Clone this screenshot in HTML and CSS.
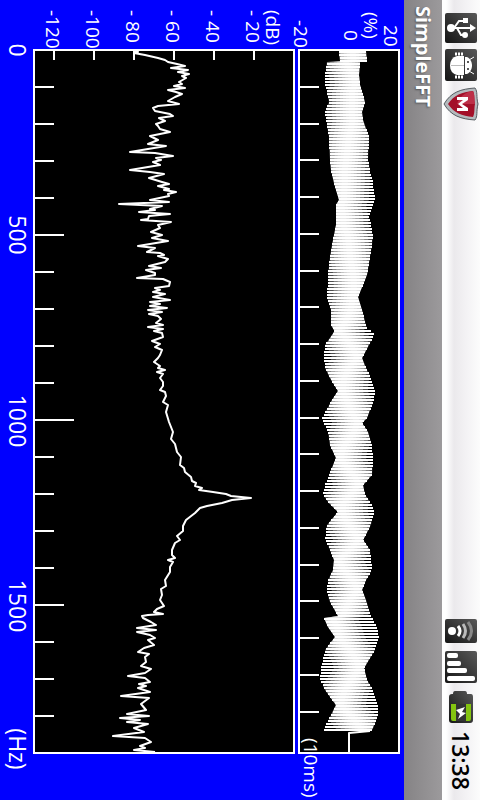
FILE: index.html
```
<!DOCTYPE html>
<html lang="en">
<head>
  <meta charset="UTF-8">
  <meta name="viewport" content="width=device-width, initial-scale=1.0">
  <title>SimpleFFT</title>
  <link rel="stylesheet" href="styles.css">
</head>
<body>

  <header class="status-bar">
    <div class="notifications">
      <svg class="icon" viewBox="0 0 32 30" width="32" height="30" role="img" aria-label="USB connected">
        <rect width="32" height="30" rx="2" fill="url(#tile)"/>
        <g stroke="#fff" stroke-width="2" fill="none">
          <path d="M6 15H26M9 15L14 8H19M12 15L16 22H21"/>
        </g>
        <circle cx="6" cy="15" r="4" fill="#fff"/>
        <path d="M25 11L31 15L25 19Z" fill="#fff"/>
        <circle cx="20" cy="22" r="3" fill="#fff"/>
        <rect x="18" y="5" width="5" height="5" fill="#fff"/>
      </svg>
      <svg class="icon" viewBox="0 0 32 32" width="32" height="32" role="img" aria-label="USB debugging">
        <rect width="32" height="32" rx="2" fill="url(#tile)"/>
        <path d="M19 7V26H12Q5 24 5 16.500Q5 9 12 7Z" fill="#fff"/>
        <path d="M20 8H22C26 10 27 14 27 16.500C27 19 26 23 22 25H20Z" fill="#fff"/>
        <path d="M10 5H18M10 28H18" stroke="#fff" stroke-width="3" stroke-dasharray="2 1"/>
        <path d="M24 11L29 8M24 22L29 25" stroke="#fff" stroke-width="1"/>
        <path d="M6 16.500H19" stroke="#bbb" stroke-width="1"/>
        <circle cx="23" cy="13" r="1" fill="#222"/>
        <circle cx="23" cy="20" r="1" fill="#222"/>
      </svg>
      <svg class="icon" viewBox="0 0 36 34" width="36" height="34" role="img" aria-label="Antivirus">
        <path d="M1 17C8 5 18 2 32 1C35 5 33 9 35 17C33 25 35 29 32 33C18 32 8 29 1 17Z" fill="#b4babd" stroke="#555b60" stroke-width="1"/>
        <path d="M5 17C11 8 19 5 30 4C32 8 31 12 32 17C31 22 32 26 30 30C19 29 11 26 5 17Z" fill="#a30f28"/>
        <path d="M14 17C18 7 24 5 30 4C32 8 31 12 32 17Z" fill="#bd3048"/>
        <path d="M14 10H25V13L19 17L25 21V24H14V21H20L15 17L20 13H14Z" fill="#fff"/>
      </svg>
    </div>
    <div class="system">
      <svg class="icon" viewBox="0 0 32 24" width="32" height="24" role="img" aria-label="Wi-Fi">
        <rect width="32" height="24" rx="2" fill="url(#tile)"/>
        <circle cx="7" cy="12" r="4" fill="#fff"/>
        <path d="M13 7Q17 12 13 17" stroke="#fff" stroke-width="3" fill="none"/>
        <path d="M18 5Q23 12 18 19" stroke="#bbb" stroke-width="3" fill="none"/>
        <path d="M23 3Q30 12 23 21" stroke="#888" stroke-width="3" fill="none"/>
      </svg>
      <svg class="icon" viewBox="0 0 32 32" width="32" height="32" role="img" aria-label="Signal">
        <rect width="32" height="32" rx="2" fill="url(#tile)"/>
        <g fill="#fff">
          <rect x="2" y="2" width="11" height="5" rx="2"/>
          <rect x="2" y="10" width="14" height="5" rx="2"/>
          <rect x="2" y="17" width="20" height="5" rx="2"/>
          <rect x="2" y="25" width="28" height="5" rx="2"/>
        </g>
      </svg>
      <svg class="icon" viewBox="0 0 32 32" width="32" height="32" role="img" aria-label="Battery charging">
        <path d="M10 0H20Q22 0 22 3H26Q28 3 28 6V29Q28 32 25 32H7Q4 32 4 29V6Q4 3 7 3H8Q8 0 10 0Z" fill="url(#tile)"/>
        <path d="M6 13H11V30H8Q6 30 6 28ZM21 13H26V28Q26 30 24 30H21Z" fill="#84c410"/>
        <rect x="11" y="13" width="10" height="17" fill="#333"/>
        <path d="M11 19L20 16L17 21L21 22L13 28L15 23Z" fill="#fff"/>
      </svg>
      <time class="clock" datetime="13:38">13:38</time>
    </div>
  </header>

  <h1 class="title-bar">SimpleFFT</h1>

  <main class="plots">
    <svg class="chart" viewBox="0 0 404 800" role="img" aria-label="Waveform and spectrum">
      <defs>
        <linearGradient id="tile" x1="0" y1="1" x2="1" y2="0">
          <stop offset="0" stop-color="#141414"/>
          <stop offset="1" stop-color="#585858"/>
        </linearGradient>
      </defs>

      <!-- spectrum -->
      <rect class="frame" x="34" y="50" width="260" height="703"/>
      <path class="tick" id="freqTicks"/>
      <path class="tick" d="M54 50V60M94 50V60M134 50V60M174 50V60M214 50V60M254 50V60"/>
      <polyline class="trace" id="spectrum"/>

      <!-- waveform -->
      <rect class="frame" x="299" y="50" width="100" height="703"/>
      <path class="tick" id="timeTicks"/>
      <g id="waveGlow"></g>
      <path class="trace" id="waveform"/>

      <g class="label">
        <text transform="translate(46 10) rotate(90)">-120</text>
        <text transform="translate(86 10) rotate(90)">-100</text>
        <text transform="translate(126 10) rotate(90)">- 80</text>
        <text transform="translate(166 10) rotate(90)">- 60</text>
        <text transform="translate(206 10) rotate(90)">- 40</text>
        <text transform="translate(246 10) rotate(90)">- 20</text>
        <text transform="translate(266 10) rotate(90)">(dB)</text>
        <text transform="translate(294 20) rotate(90)">-20</text>
        <text transform="translate(344 30) rotate(90)">0</text>
        <text transform="translate(364 12) rotate(90)">(%)</text>
        <text transform="translate(384 25) rotate(90)">20</text>
        <text transform="translate(304 738) rotate(90)">(10ms)</text>
      </g>
      <g class="label freq">
        <text transform="translate(9 50) rotate(90)">0</text>
        <text transform="translate(9 235) rotate(90)">500</text>
        <text transform="translate(9 421) rotate(90)">1000</text>
        <text transform="translate(9 606) rotate(90)">1500</text>
        <text transform="translate(9 749) rotate(90)">(Hz)</text>
      </g>
    </svg>
  </main>

  <script src="chart.js"></script>
</body>
</html>
```
FILE: styles.css
```
html, body {
  height: 100%;
}

body {
  margin: 0;
  display: flex;
  flex-direction: row-reverse;
  background: #0000ff;
  font-family: "Open Sans", "Noto Sans", sans-serif;
  overflow: hidden;
}

/* the screen is held sideways, so both bars run top to bottom */
.status-bar {
  flex: 0 0 38px;
  box-sizing: border-box;
  padding: 13px 0 10px;
  display: flex;
  justify-content: space-between;
  writing-mode: vertical-rl;
  background: linear-gradient(to right, #ffffff 0, #ffffff 4px, #ebe9ec 12px, #f3f2f4 24px, #fcfcfc 100%);
}

.notifications, .system {
  display: flex;
  align-items: center;
  gap: 8px;
}

.notifications {
  gap: 6px;
}

.icon {
  display: block;
  flex: none;
}

.clock {
  color: #000;
  font-size: 23px;
  line-height: 38px;
  font-weight: 600;
}

.title-bar {
  flex: 0 0 38px;
  box-sizing: border-box;
  margin: 0;
  padding-top: 6px;
  writing-mode: vertical-rl;
  background: linear-gradient(to right, #858385, #9c9a9c);
  color: #fff;
  font-size: 20px;
  line-height: 38px;
  font-weight: 700;
  text-shadow: 1px 1px 2px #555;
}

.plots {
  flex: 1;
  min-width: 0;
}

.chart {
  display: block;
  width: 100%;
  height: 100%;
}

.frame {
  fill: #000;
  stroke: #fff;
  stroke-width: 2;
}

.tick {
  fill: none;
  stroke: #fff;
  stroke-width: 2;
}

.trace {
  fill: none;
  stroke: #fff;
  stroke-width: 2;
  stroke-linejoin: round;
}

.glow {
  fill: #fff;
  fill-opacity: 0.3;
}

.label {
  fill: #fff;
  font-size: 19px;
}

.freq {
  font-size: 23px;
  text-anchor: middle;
}
```
FILE: chart.js
```
const TOP = 50

// level of the spectrum along the frequency axis: [x, y]
const spectrum = [
  [134, 51], [138, 52], [134, 53], [145, 55], [158, 58], [165, 60], [168, 62], [177, 64], [185, 66],
  [171, 68], [188, 70], [178, 72], [189, 74], [182, 76], [186, 78], [179, 82], [182, 84], [174, 86], [185, 88],
  [168, 90], [176, 92], [182, 94], [175, 97], [168, 101], [179, 104], [158, 106], [153, 108], [155, 111],
  [170, 114], [173, 116], [159, 118], [165, 121], [156, 124], [158, 126], [160, 129], [170, 132],
  [150, 136], [158, 140], [148, 144], [166, 146], [148, 149], [130, 152], [155, 153], [173, 156], [156, 158],
  [161, 160], [153, 162], [160, 165], [130, 170], [150, 172], [164, 174], [149, 178], [162, 182],
  [169, 184], [158, 186], [169, 189], [164, 190], [176, 192], [168, 194], [169, 196], [150, 200], [169, 202],
  [119, 204], [162, 206], [150, 209], [155, 210], [139, 212], [170, 214], [149, 216], [148, 219],
  [141, 220], [171, 222], [158, 225], [160, 228], [151, 232], [162, 235], [152, 238], [168, 241],
  [138, 246], [155, 248], [147, 252], [160, 253], [164, 255], [158, 256], [168, 259], [165, 262],
  [149, 266], [161, 268], [146, 270], [155, 273], [155, 275], [137, 278], [163, 279], [170, 282], [169, 286],
  [155, 288], [160, 290], [153, 292], [165, 294], [153, 297], [170, 300], [150, 302], [160, 304], [150, 306],
  [167, 308], [148, 310], [162, 312], [149, 314], [158, 316], [161, 319], [156, 323], [163, 325], [148, 327], [163, 329],
  [154, 331], [162, 333], [163, 337], [152, 341], [160, 344], [155, 347], [162, 350], [160, 355], [158, 358], [154, 362],
  [160, 366], [158, 368], [165, 370], [157, 372], [163, 374], [160, 378], [163, 382], [163, 386],
  [160, 390], [165, 392], [166, 396], [163, 402], [168, 405], [166, 412], [169, 422], [173, 432],
  [171, 439], [175, 444], [177, 452], [181, 457], [180, 465], [184, 468], [185, 472], [191, 477],
  [192, 481], [196, 483], [195, 486], [202, 488], [199, 490], [213, 492], [226, 494], [231, 496],
  [251, 498], [232, 500], [222, 503], [207, 506], [200, 508], [195, 513], [186, 520], [183, 526],
  [183, 531], [177, 536], [180, 540], [175, 543], [172, 550], [172, 555], [175, 558], [168, 560],
  [173, 562], [170, 567], [170, 572], [165, 580], [166, 586], [161, 589], [162, 595], [160, 600],
  [164, 606], [157, 609], [154, 612], [163, 614], [148, 615], [142, 616], [143, 618], [151, 622],
  [156, 625], [137, 628], [156, 630], [137, 632], [150, 635], [155, 638], [148, 640], [154, 645],
  [144, 648], [138, 652], [149, 654], [145, 657], [146, 662], [141, 666], [151, 669], [145, 673],
  [128, 676], [145, 678], [150, 682], [139, 684], [146, 686], [138, 688], [150, 692], [121, 696],
  [149, 698], [141, 704], [146, 710], [127, 714], [149, 716], [120, 718], [140, 720], [127, 722],
  [148, 724], [134, 728], [144, 732], [113, 736], [145, 738], [151, 742], [140, 746], [145, 748],
  [134, 750], [155, 752]
]

// outline of the recorded tone: [y, left, right, core]
// core tells which side the samples crowd to, 0 = left, 1 = right
const envelope = [
  [51, 339, 366, 0.5], [61, 340, 367, 0.5], [62, 327, 360, 0.6], [75, 325, 359, 1], [85, 325, 360, 1],
  [92, 327, 362, 0.8], [102, 329, 365, 0.7], [112, 325, 362, 0.8], [120, 326, 363, 0.8], [137, 329, 369, 0.5],
  [160, 330, 368, 0.4], [170, 331, 370, 0.3], [183, 334, 373, 0.2], [200, 339, 375, 0], [205, 336, 373, 0],
  [217, 336, 369, 0.1], [225, 336, 371, 0.1], [235, 334, 373, 0.3], [245, 332, 372, 0.4], [257, 330, 370, 0.5],
  [275, 328, 367, 0.7], [297, 327, 358, 1], [310, 331, 362, 0.7], [325, 331, 366, 0.3], [330, 334, 367, 0],
  [332, 334, 375, 0], [335, 332, 374, 0.2], [345, 325, 369, 0.6], [358, 324, 362, 1], [368, 325, 366, 0.6],
  [378, 330, 371, 0.3], [391, 338, 375, 0], [400, 332, 374, 0.3], [418, 322, 367, 0.8], [423, 324, 362, 1],
  [432, 328, 368, 0.7], [445, 330, 372, 0.3], [458, 336, 373, 0], [475, 329, 372, 0.6], [485, 325, 363, 1],
  [495, 323, 365, 0.7], [503, 329, 371, 0.3], [512, 338, 374, 0], [525, 327, 371, 0.5], [540, 325, 363, 1],
  [550, 330, 370, 0.5], [560, 334, 371, 0], [570, 333, 372, 0.2], [580, 328, 366, 0.7], [590, 327, 362, 1],
  [600, 329, 366, 0.6], [616, 338, 371, 0], [618, 324, 372, 0.1], [627, 328, 377, 0.1], [637, 335, 379, 0],
  [650, 325, 375, 0.5], [668, 321, 364, 1], [680, 320, 367, 0.7], [690, 325, 373, 0.4], [705, 336, 378, 0],
  [715, 331, 378, 0.4], [728, 324, 373, 0.8], [733, 323, 370, 1]
]

const envelopeAt = (y) => {
  const i = Math.max(1, envelope.findIndex(e => e[0] >= y))
  const a = envelope[i - 1]
  const b = envelope[i]
  const t = (y - a[0]) / (b[0] - a[0])
  return [1, 2, 3].map(k => a[k] + (b[k] - a[k]) * t)
}

const setPath = (id, d) => document.getElementById(id).setAttribute('d', d)

const drawSpectrum = () => {
  document.getElementById('spectrum').setAttribute('points', spectrum.join(' '))
}

// band of the given half width around the crowded side, cut at the outline
const band = (half) => {
  const leftSide = []
  const rightSide = []
  for (let y = 51; y < 732; y += 1) {
    const [left, right, core] = envelopeAt(y)
    const middle = left + 5 + (right - left - 10) * core
    leftSide.push([Math.max(left, middle - half), y])
    rightSide.unshift([Math.min(right, middle + half), y])
  }
  return `M${leftSide.concat(rightSide).join('L')}Z`
}

const drawWaveform = () => {
  let lines = ''
  for (let y = 52; y < 732; y += 3) {
    const [left, right] = envelopeAt(y)
    lines += `M${Math.round(left)} ${y}H${Math.round(right)}`
  }
  setPath('waveform', lines + 'M370 731L349 733V753')
  document.getElementById('waveGlow').innerHTML = [3, 6, 9, 12, 16, 20, 25]
    .map(half => `<path class="glow" d="${band(half)}"/>`).join('')
}

const drawTicks = () => {
  let freq = ''
  let time = ''
  for (let i = 1; i < 19; i++) {
    // longer mark every 500 Hz, longest at 1000 Hz
    const end = i % 10 === 0 ? 74 : i % 5 === 0 ? 64 : 54
    freq += `M34 ${TOP + 37 * i}H${end}`
    time += `M299 ${Math.round(TOP + 36.75 * i)}H319`
  }
  setPath('freqTicks', freq)
  setPath('timeTicks', time)
}

drawTicks()
drawSpectrum()
drawWaveform()
```
